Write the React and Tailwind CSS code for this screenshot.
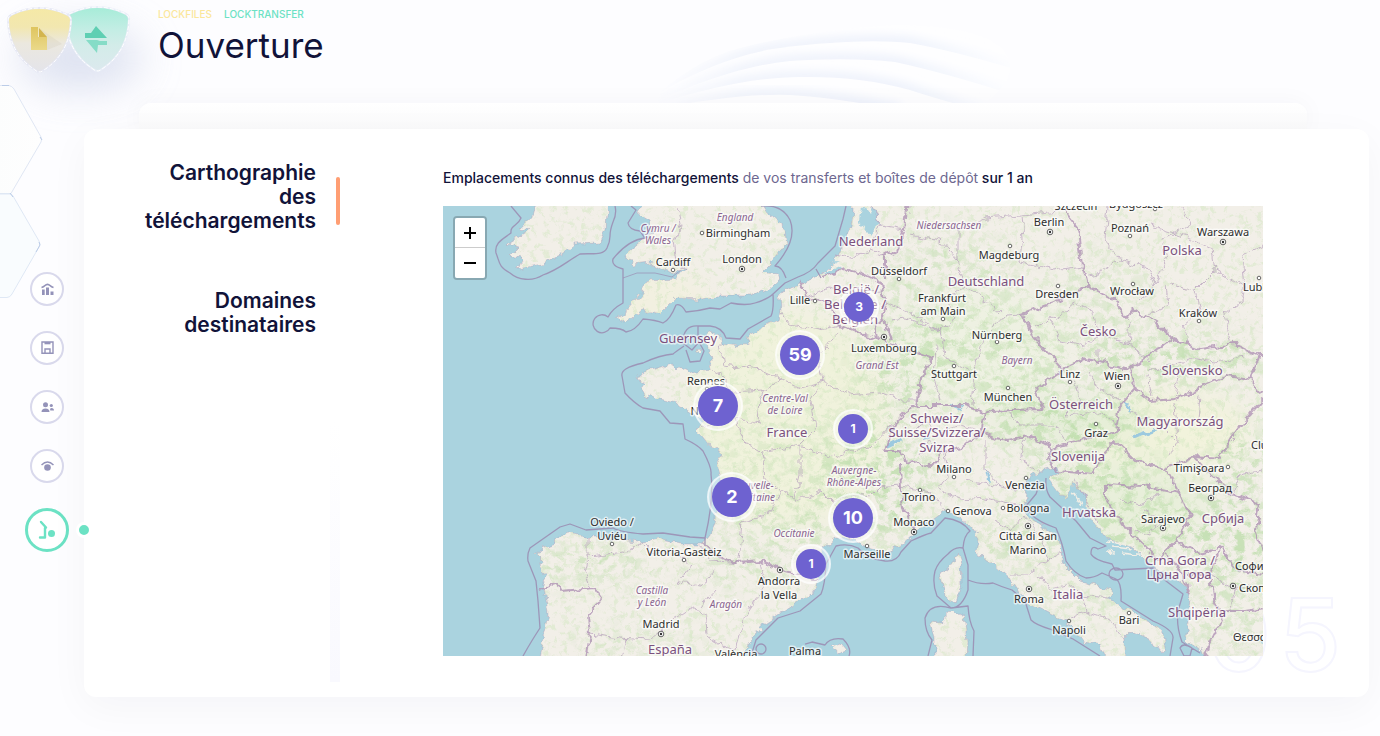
import React from "react";

const LAND = [
  "M539 660 L543 638 L548 614 L545 594 L543 583 L547 576 L540 570 L544 562 L536 554 L540 548 L556 543 L558 537 L568 532 L580 534 L583 538 L610 538 L630 541 L643 543 L660 540 L683 544 L703 544 L711 534 L715 518 L718 496 L721 474 L717 462 L723 452 L710 446 L698 431 L702 420 L688 409 L676 403 L656 398 L648 394 L645 398 L640 388 L646 384 L636 378 L640 373 L656 369 L673 364 L680 369 L688 373 L696 371 L712 369 L710 353 L703 338 L709 333 L719 335 L721 343 L738 346 L750 342 L748 336 L761 328 L778 321 L781 311 L780 296 L785 289 L801 284 L818 276 L825 271 L835 263 L841 249 L850 233 L853 213 L853 200 L1270 200 L1270 660 L1206 660 L1203 652 L1193 646 L1185 634 L1190 624 L1187 611 L1190 594 L1185 586 L1175 578 L1163 571 L1146 561 L1133 548 L1106 538 L1090 519 L1083 494 L1073 481 L1068 498 L1060 494 L1048 479 L1059 473 L1056 467 L1040 471 L1028 479 L1022 487 L1029 496 L1023 506 L1030 518 L1050 531 L1060 548 L1063 564 L1080 581 L1103 588 L1113 589 L1108 598 L1126 608 L1140 618 L1160 629 L1167 641 L1163 652 L1153 646 L1150 639 L1131 631 L1123 639 L1124 660 L1106 660 L1100 644 L1083 641 L1071 624 L1060 618 L1040 608 L1023 598 L1010 579 L993 564 L976 550 L979 538 L966 521 L945 511 L931 521 L915 533 L901 546 L885 553 L868 548 L851 539 L835 538 L823 548 L818 562 L818 578 L815 591 L791 606 L763 624 L748 644 L742 660 Z",
  "M643 200 L638 214 L650 221 L653 233 L643 239 L635 246 L625 254 L633 264 L650 262 L662 270 L674 274 L686 266 L676 278 L650 280 L641 293 L628 309 L616 318 L626 323 L643 309 L660 314 L676 298 L703 299 L718 296 L751 296 L768 289 L779 280 L777 274 L762 272 L773 261 L785 246 L782 223 L768 213 L760 200 Z",
  "M537 200 L531 218 L520 228 L529 230 L514 239 L506 244 L519 247 L510 256 L522 258 L518 269 L543 264 L560 256 L576 244 L600 243 L606 229 L608 200 Z",
  "M958 554 L961 564 L962 584 L955 603 L945 594 L940 574 L950 567 Z",
  "M931 621 L940 622 L952 611 L964 616 L967 640 L966 660 L935 660 L935 638 Z",
  "M832 647 L840 644 L845 650 L837 653 Z",
  "M696 350 l5 -1 l-1 4 Z",
];

const MARITIME =
  "M511 206 L521 218 C518 226 510 225 511 233 C503 239 494 243 496 253 C500 263 498 266 510 273 C518 280 532 282 543 275 C558 270 566 262 580 254 C592 253 603 256 607 248 C613 235 607 238 613 222 Q617 214 615 206 M631 206 L636 210 L628 223 Q629 230 640 231 L645 238 Q628 240 613 259 Q611 266 623 269 L623 303 Q612 309 608 317 A9 9 0 1 0 610 328 Q622 328 626 332 Q635 331 643 319 Q656 320 663 323 Q670 320 676 305 Q681 303 686 312 Q699 311 710 308 L720 309 L731 303 Q746 306 755 303 Q768 299 773 294 L785 283 L798 277 Q812 272 818 263 L835 246 L843 219 L846 206 M761 206 Q782 204 790 220 Q798 240 775 266 Q782 266 786 278 M816 269 L821 278 M773 294 Q774 310 771 316 L748 329 L740 339 L726 338 Q722 327 710 326 L698 326 Q683 325 683 343 L692 350 L699 342 L704 351 L700 361 L690 362 L686 350 M698 326 L698 342 M684 346 Q674 353 673 354 Q660 355 643 363 Q620 368 622 376 L625 393 Q634 403 643 408 L660 411 L670 423 L683 424 L685 439 Q698 445 703 451 Q712 468 711 474 Q714 500 705 538 L690 537 L663 533 L643 534 Q620 532 613 528 L586 530 L570 524 L560 527 L530 548 Q527 554 528 561 L536 581 L538 601 L540 628 Q532 640 523 656 M705 538 V545 M751 656 L756 640 L778 618 L800 611 L821 594 Q825 585 826 564 L836 546 Q848 543 858 548 Q867 559 885 561 Q897 562 901 552 L911 541 Q926 534 931 533 L945 518 Q962 520 970 531 Q964 535 963 548 Q955 546 948 554 Q938 562 935 571 Q932 584 937 596 L951 608 Q962 608 968 590 L968 565 L963 548 M951 608 Q930 602 925 618 Q925 632 932 640 L928 656 M951 608 L968 606 Q969 622 974 631 L973 656 M968 580 Q980 585 993 583 Q1002 587 1012 590 L1025 601 L1031 620 Q1036 625 1050 629 L1073 639 L1100 656 M805 644 L812 642 L825 645 Q830 637 843 639 Q852 648 849 656 M1038 481 Q1038 490 1036 494 L1026 506 Q1030 519 1056 528 Q1063 544 1066 561 Q1074 574 1086 578 Q1094 578 1102 573 L1116 579 Q1122 583 1121 601 L1153 621 Q1174 630 1173 638 L1170 656 M1046 478 Q1045 490 1050 497 L1076 521 L1090 538 L1106 546 L1098 549 Q1091 544 1091 554 Q1094 560 1112 564 L1115 570 L1153 568 L1166 581 L1183 594 L1178 611 Q1176 626 1182 642 L1200 653 M1109 574 a7 6 0 1 0 14 0 a7 6 0 1 0 -14 0 M1180 648 q3 -6 12 0 l-2 8 h-6 Z M756 649 a5 5 0 1 0 10 0 a5 5 0 1 0 -10 0";

const BORDERS =
  "M703 544 L718 556 L738 563 L761 561 L785 571 L800 575 L817 579 M538 590 L558 583 L561 591 L595 588 L603 599 L588 616 L590 634 L586 660 M800 279 L806 296 L828 303 L841 326 L860 334 L878 339 L931 358 L921 379 L916 406 M821 278 L845 269 L861 273 L881 283 L885 303 L882 318 L892 339 M908 200 L905 229 L898 249 L885 256 L885 279 M878 339 L876 325 L884 316 M916 406 L905 413 L891 429 L885 451 L900 451 L905 464 L918 461 L930 468 L945 451 L961 448 L981 434 L985 413 L965 406 Z M900 464 L901 488 L903 508 L915 531 M1066 200 L1066 214 L1078 229 L1081 256 L1088 286 L1053 303 L1023 314 L1033 336 L1063 369 L1086 359 L1130 369 L1166 343 L1173 339 L1156 323 L1133 309 L1126 318 L1116 301 L1088 286 M1130 369 L1135 389 L1150 401 L1175 399 L1200 388 L1226 376 L1250 379 L1260 356 L1236 344 L1200 349 L1173 339 M1260 356 L1270 356 M1063 369 L1036 389 L1043 409 L1015 410 L993 411 L985 413 M1135 389 L1120 406 L1116 431 L1085 439 L1053 448 L1030 436 L1005 440 L981 434 M1053 448 L1048 458 L1056 471 L1093 474 L1103 454 L1115 441 L1136 461 L1166 468 L1193 456 L1220 458 L1240 426 L1263 399 M1105 484 L1143 486 L1180 494 L1190 518 L1176 541 L1166 551 L1158 560 L1126 528 L1105 498 Z M1166 468 L1180 494 M1193 456 L1210 474 L1233 494 L1260 504 L1256 531 L1265 554 M1176 541 L1200 554 L1220 548 L1240 571 L1265 574 M1166 554 L1180 571 L1190 594 M1186 574 L1210 574 L1213 598 L1223 618 L1210 644 L1205 660 M1223 612 L1245 612 L1265 609 M1210 574 L1220 548 M1250 379 L1263 394";

const REGIONS =
  "M588 538 L588 556 L584 572 L590 588 M588 556 L625 552 L643 543 M643 543 L655 555 L670 548 L690 565 L678 582 L702 586 L715 570 M700 545 L712 560 L738 563 M760 562 L765 585 L745 615 L735 650 M590 634 L620 638 L650 640 L672 620 L690 608 L705 615 L708 640 L735 650 M626 638 L622 660 M715 590 L700 608 M781 311 L790 325 L820 330 L841 326 M720 343 L724 365 L760 370 L782 380 L800 388 L822 382 L818 355 L838 332 M712 369 L724 378 L732 392 L764 390 L782 378 M822 382 L810 400 L815 430 L800 445 L830 458 L852 450 L870 448 L892 425 M822 382 L850 395 L880 392 L900 400 L916 400 M700 428 L735 418 L758 424 L760 400 L764 390 M735 418 L742 440 L762 452 L800 445 M762 452 L765 478 L780 490 L800 500 L820 490 L832 502 L850 495 M800 445 L800 475 L794 500 M780 490 L770 515 L742 522 L738 560 M832 502 L850 530 L852 540 M850 495 L870 498 L880 488 L900 486 M885 256 L870 250 L850 258 L835 255 M870 250 L880 225 L905 229 M880 225 L872 206 M806 296 L830 288 L850 292 L882 290 M910 235 L940 240 L958 260 L964 285 L945 300 L955 318 L940 330 L905 318 L890 320 M885 303 L905 310 L925 322 L940 330 L945 355 L975 375 L982 340 L1005 315 L1023 314 M964 285 L985 300 L1000 312 M958 260 L958 230 L985 218 L1022 215 L1024 240 L1020 262 L1055 270 L1082 266 M1022 215 L1066 210 M975 375 L972 405 M936 345 L934 378 L940 400 M1108 206 L1105 240 L1120 260 L1100 272 L1088 275 M1120 260 L1148 268 L1156 285 L1140 300 M1156 285 L1166 260 L1162 240 L1190 225 L1182 206 M1148 225 L1190 238 L1212 250 L1215 270 L1195 290 L1170 284 M1215 270 L1245 288 L1242 300 L1225 315 L1232 345 M1195 290 L1200 310 L1182 325 L1188 342 M1245 288 L1242 255 L1263 245 M1166 285 L1168 305 L1148 315 M1035 326 L1060 315 L1075 302 L1095 312 L1098 335 L1085 345 L1060 340 L1052 320 M1098 335 L1130 345 L1150 360 M1130 320 L1128 345 M1098 350 L1098 362 M1150 370 L1175 365 L1190 358 L1215 362 L1245 358 M1148 375 L1152 398 M1180 370 L1175 398 M1075 380 L1080 400 L1065 415 L1098 412 L1116 425 M1120 400 L1100 390 L1088 372 M1010 412 L1020 425 L1055 425 L1065 440 M945 451 L948 475 L938 490 L960 500 L985 498 L1020 505 M900 486 L930 492 L945 511 M965 480 L1000 486 L1022 490 M985 440 L985 470 L1000 486 M1025 440 L1020 460 L1040 471 M993 520 L1010 530 L1024 515 L1040 535 L1048 560 L1028 575 L1010 575 M1048 560 L1062 552 M1040 575 L1052 590 L1070 585 L1082 595 L1085 612 L1068 618 M1082 595 L1108 598 M1085 612 L1110 620 L1123 639 M1175 405 L1178 440 L1170 455 M1200 395 L1198 420 M1130 410 L1160 425 L1175 440 M1145 510 L1160 520 L1150 535 L1135 530 M1120 500 L1140 505 L1160 495 M1210 574 L1235 590 L1250 585 M1235 590 L1230 610 M1233 494 L1240 475 L1263 470 M1100 525 L1085 500 L1075 480 M678 206 L682 225 L673 240 L676 262 L685 268 M915 430 L925 420 L940 432 L960 425 L978 430 M920 455 L930 440 L945 451";

const GREENERY = [
  [880, 480, 55, 60, 0.9], [1060, 420, 95, 24, 1], [800, 520, 50, 38, 0.6], [950, 290, 70, 60, 0.5],
  [1000, 360, 80, 40, 0.6], [1170, 360, 100, 25, 0.9], [1090, 470, 60, 30, 0.9], [1150, 530, 60, 36, 0.9],
  [1235, 540, 45, 50, 0.9], [900, 370, 45, 45, 0.8], [1020, 540, 50, 22, 0.8], [740, 565, 60, 12, 0.8],
  [590, 562, 60, 18, 0.8], [640, 650, 70, 20, 0.4], [1100, 300, 50, 50, 0.4], [1230, 620, 50, 40, 0.5],
  [1240, 460, 30, 30, 0.9], [1060, 600, 80, 20, 0.4], [735, 500, 20, 40, 0.6], [800, 440, 80, 40, 0.35],
];

const CITIES = [
  ["Birmingham", 738, 237], ["Cardiff", 673, 266], ["London", 742, 263], ["Lille", 800, 304], ["Düsseldorf", 899, 275],
  ["Frankfurt", 942, 302], ["am Main", 943, 315], ["Luxembourg", 884, 352], ["Stuttgart", 954, 378], ["Nürnberg", 997, 339],
  ["München", 1008, 401], ["Magdeburg", 1009, 259], ["Berlin", 1049, 226], ["Szczecin", 1076, 210], ["Poznań", 1130, 232],
  ["Bydgoszcz", 1136, 208], ["Warszawa", 1223, 236], ["Wrocław", 1132, 295], ["Dresden", 1057, 298], ["Kraków", 1198, 317], ["Linz", 1070, 378],
  ["Wien", 1117, 380], ["Graz", 1096, 437], ["Milano", 954, 473], ["Torino", 919, 501], ["Genova", 972, 515],
  ["Monaco", 914, 526], ["Marseille", 867, 558], ["Venezia", 1025, 489], ["Bologna", 1028, 512], ["Città di San", 1028, 540],
  ["Marino", 1028, 554], ["Roma", 1029, 603], ["Napoli", 1069, 634], ["Bari", 1129, 624], ["Sarajevo", 1163, 523],
  ["Београд", 1210, 492], ["Timişoara", 1199, 472], ["Oviedo /", 612, 526], ["Uviéu", 612, 540], ["Vitoria-Gasteiz", 684, 556],
  ["Madrid", 661, 628], ["Andorra", 779, 585], ["la Vella", 779, 599], ["València", 736, 658], ["Palma", 805, 655],
  ["Rennes", 706, 385], ["Nantes", 709, 415],
];

const EDGE_CITIES = [
  ["Lublin", 1243, 291], ["Cluj-Napoca", 1251, 449], ["София", 1235, 570], ["Скопје", 1239, 592], ["Θεσσαλονίκη", 1233, 641],
];

const COUNTRIES = [
  ["Nederland", 871, 246], ["België /", 856, 294], ["Belgique /", 855, 309], ["Belgien", 855, 324], ["Deutschland", 986, 286],
  ["Polska", 1182, 255], ["Česko", 1098, 336], ["Slovensko", 1192, 375], ["Österreich", 1081, 409], ["Magyarország", 1180, 426],
  ["Slovenija", 1078, 461], ["Hrvatska", 1089, 517], ["Србија", 1223, 523], ["Crna Gora /", 1180, 565], ["Црна Гора", 1179, 579],
  ["Shqipëria", 1197, 617], ["Italia", 1068, 599], ["España", 670, 654], ["France", 787, 437], ["Guernsey", 688, 343],
  ["Schweiz/", 937, 423], ["Suisse/Svizzera/", 937, 437], ["Svizra", 937, 452],
];

const AREAS = [
  ["England", 735, 221], ["Cymru /", 658, 232], ["Wales", 658, 244], ["Niedersachsen", 949, 229], ["Grand Est", 877, 369],
  ["Centre-Val", 785, 402], ["de Loire", 785, 414], ["Bayern", 1017, 364], ["Auvergne-", 854, 474], ["Rhône-Alpes", 854, 486],
  ["Nouvelle-", 753, 489], ["Aquitaine", 754, 501], ["Occitanie", 794, 537], ["Castilla", 652, 594], ["y León", 652, 606],
  ["Aragón", 726, 608],
];

const DOTS = [
  [702, 233], [673, 270], [815, 301], [899, 279], [943, 319], [954, 366], [997, 342], [1008, 388], [1010, 246], [1130, 236],
  [1155, 209], [1133, 284], [1058, 286], [1199, 321], [1070, 382], [1096, 424], [954, 477], [920, 490], [948, 511], [867, 546],
  [1026, 478], [1003, 508], [1069, 621], [1129, 613], [1228, 467], [612, 544], [684, 560], [1259, 278], [707, 389],
];

const CAPITALS = [
  [742, 269], [884, 337], [1050, 232], [1223, 242], [1118, 386], [914, 532], [1028, 526], [1029, 589], [1163, 528],
  [1211, 498], [661, 634], [780, 570], [1233, 586],
];

const MARKERS = [
  { id: "be", count: 3, place: "left-[396px] top-[81px]", small: true },
  { id: "paris", count: 59, place: "left-[332px] top-[124px]" },
  { id: "nantes", count: 7, place: "left-[250px] top-[175px]" },
  { id: "lyon", count: 1, place: "left-[390px] top-[203px]", small: true },
  { id: "bordeaux", count: 2, place: "left-[264px] top-[266px]" },
  { id: "marseille", count: 10, place: "left-[385px] top-[287px]" },
  { id: "perpignan", count: 1, place: "left-[348px] top-[338px]", small: true },
];

function Labels({ items, anchor, className }) {
  return (
    <g textAnchor={anchor} className={className} stroke="#ffffff" strokeOpacity="0.65" strokeWidth="3" strokeLinejoin="round" paintOrder="stroke">
      {items.map(([text, x, y]) => (
        <text key={text} x={x} y={y}>{text}</text>
      ))}
    </g>
  );
}

function EuropeMap() {
  return (
    <svg viewBox="443 206 820 450" preserveAspectRatio="xMinYMin slice" className="block h-full w-full" role="img" aria-label="Europe">
      <defs>
        <clipPath id="land">{LAND.map((d) => <path key={d} d={d} />)}</clipPath>
        <filter id="rough" filterUnits="userSpaceOnUse" x="430" y="190" width="850" height="480" colorInterpolationFilters="sRGB">
          <feTurbulence type="fractalNoise" baseFrequency="0.11" numOctaves="3" seed="4" />
          <feColorMatrix values="1 0 0 0 0  0 1 0 0 0  0 0 1 0 0  0 0 0 0 1" result="n" />
          <feDisplacementMap in="SourceGraphic" in2="n" scale="9" xChannelSelector="R" yChannelSelector="G" />
        </filter>
        <filter id="woods" filterUnits="userSpaceOnUse" x="430" y="190" width="850" height="480" colorInterpolationFilters="sRGB">
          <feTurbulence type="fractalNoise" baseFrequency="0.09 0.12" numOctaves="6" seed="11" />
          <feColorMatrix values="0 0 0 0 0.75  0 0 0 0 0.87  0 0 0 0 0.68  5 0 0 0 -2.4" />
        </filter>
        <filter id="fields" filterUnits="userSpaceOnUse" x="430" y="190" width="850" height="480" colorInterpolationFilters="sRGB">
          <feTurbulence type="fractalNoise" baseFrequency="0.16" numOctaves="5" seed="27" />
          <feColorMatrix values="0 0 0 0 0.81  0 0 0 0 0.90  0 0 0 0 0.74  0 5 0 0 -2.6" />
        </filter>
        <filter id="soft"><feGaussianBlur stdDeviation="14" /></filter>
        <mask id="density" maskUnits="userSpaceOnUse" x="430" y="190" width="850" height="480">
          <g filter="url(#soft)" fill="#fff">
            {GREENERY.map(([x, y, rx, ry, o]) => <ellipse key={`${x}-${y}`} cx={x} cy={y} rx={rx} ry={ry} opacity={o} />)}
          </g>
        </mask>
      </defs>
      <rect x="443" y="206" width="820" height="450" fill="#aad3df" />
      <g filter="url(#rough)">
        <g fill="#f2efe8">{LAND.map((d) => <path key={d} d={d} />)}</g>
        <g clipPath="url(#land)">
          <g filter="url(#soft)">
            <ellipse cx="790" cy="420" rx="100" ry="110" fill="#f0f2dc" />
            <ellipse cx="1160" cy="430" rx="90" ry="40" fill="#f2f3dc" />
            <ellipse cx="980" cy="350" rx="90" ry="60" fill="#eef1e2" />
            <ellipse cx="1070" cy="420" rx="80" ry="20" fill="#e3edd6" />
            <ellipse cx="1130" cy="500" rx="80" ry="40" fill="#e8efda" />
            <ellipse cx="650" cy="300" rx="60" ry="30" fill="#f2f0e0" />
            <ellipse cx="970" cy="500" rx="50" ry="20" fill="#f2efe8" />
          </g>
          <rect x="430" y="190" width="850" height="480" filter="url(#fields)" opacity="0.45" />
          <g mask="url(#density)" opacity="0.9">
            <rect x="430" y="190" width="850" height="480" filter="url(#woods)" />
          </g>
        </g>
        <g fill="none" stroke="#a78fae" strokeOpacity="0.45" strokeWidth="0.8">{LAND.map((d) => <path key={d} d={d} />)}</g>
        <g fill="#aad3df">
          <path d="M862 206 L868 214 L872 206 L880 224 L870 236 L860 222 Z" />
          <path d="M822 274 L838 266 L842 269 L830 275 Z M824 262 L840 261 L832 265 Z" />
          <path d="M1070 484 L1080 494 L1090 512 L1084 510 L1076 498 L1070 498 Z M1262 640 l6 -8 v20 Z" />
          <path d="M886 444 l14 -5 l1 3 l-14 6 Z M1131 436 l22 -8 l2 3 l-20 8 Z M985 468 l6 14 l-4 -1 Z" fill="#9cc9df" />
          <path d="M923 440 l8 -3 M950 405 l12 4 M1124 402 l6 8" stroke="#9cc9df" strokeWidth="2" />
        </g>
        <g fill="none" stroke="#f1eee6" strokeWidth="1.6">
          <path d="M1074 492 l8 13 M1082 508 l9 9 M1094 519 l8 10 M1108 541 l18 4 M1112 547 l20 2 M1122 553 l22 3 M1106 552 l10 1" />
        </g>
        <path d={REGIONS} fill="none" stroke="#b8a1bd" strokeOpacity="0.7" strokeWidth="1" />
        <path d={BORDERS} fill="none" stroke="#b093b5" strokeOpacity="0.8" strokeWidth="2" strokeLinejoin="round" />
      </g>
      <path d={MARITIME} fill="none" stroke="#9b8fb4" strokeOpacity="0.9" strokeWidth="1.3" strokeLinejoin="round" />
      <path d="M623 278 L637 273 L655 273 L672 277 L681 270" fill="none" stroke="#9b8fb4" strokeOpacity="0.7" />
      <g fill="#ffffff" stroke="#555" strokeWidth="0.9">
        {DOTS.map(([x, y]) => <circle key={`${x}-${y}`} cx={x} cy={y} r="1.8" />)}
        {CAPITALS.map(([x, y]) => <circle key={`${x}-${y}`} cx={x} cy={y} r="2.8" />)}
      </g>
      <g fill="#333">
        {CAPITALS.map(([x, y]) => <circle key={`${x}-${y}`} cx={x} cy={y} r="1.2" />)}
      </g>
      <Labels items={AREAS} anchor="middle" className="fill-[#8a6590] text-[10px] italic" />
      <Labels items={COUNTRIES} anchor="middle" className="fill-[#7b517e] text-[13px]" />
      <Labels items={CITIES} anchor="middle" className="fill-[#2e2e2e] text-[11px]" />
      <Labels items={EDGE_CITIES} anchor="start" className="fill-[#2e2e2e] text-[11px]" />
    </svg>
  );
}

function Marker({ count, place, small }) {
  return (
    <button
      type="button"
      aria-label={`${count} téléchargements`}
      className={`absolute flex items-center justify-center rounded-full border-2 border-white/60 bg-white/40 ${small ? "size-10" : "size-[50px]"} ${place}`}
    >
      <span
        className={`flex shrink-0 items-center justify-center rounded-full bg-[#6e62d0] text-white ${small ? "size-[30px] text-xs font-bold" : "size-10 text-lg font-bold"}`}
      >
        {count}
      </span>
    </button>
  );
}

const WAVES = [
  "M650 98 Q720 56 780 48 Q860 38 910 43 Q960 52 1030 74",
  "M650 104 Q730 67 790 61 Q850 57 895 62 Q950 74 1020 97",
  "M650 106 Q740 77 800 77 Q860 76 910 90 Q940 100 1000 116",
  "M650 110 Q740 93 790 95 Q830 97 900 110",
];

function Backdrop() {
  return (
    <div aria-hidden="true" className="pointer-events-none absolute inset-0 overflow-hidden">
      <svg width="1100" height="320" viewBox="0 0 1100 320" fill="none">
        <defs>
          <filter id="haze" x="-80%" y="-120%" width="260%" height="340%"><feGaussianBlur stdDeviation="20" /></filter>
          <filter id="fade" x="-10%" y="-60%" width="120%" height="220%"><feGaussianBlur stdDeviation="4" /></filter>
          <linearGradient id="hexA" x1="0" y1="0" x2="1" y2="0"><stop offset="0" stopColor="#fcfdfd" /><stop offset="1" stopColor="#fefefe" /></linearGradient>
          <linearGradient id="ends" gradientUnits="userSpaceOnUse" x1="655" y1="0" x2="1012" y2="0"><stop offset="0" stopColor="#fdfdff" /><stop offset="0.25" stopColor="#f1f4fc" /><stop offset="0.7" stopColor="#eff3fc" /><stop offset="1" stopColor="#fcfdff" /></linearGradient>
          <clipPath id="dome"><path d="M655 110 L660 92 Q700 58 740 48 Q810 30 895 25 Q1012 26 1010 70 Q1008 86 985 103 L980 110 Z" /></clipPath>
        </defs>
        <ellipse cx="80" cy="58" rx="62" ry="32" fill="#d3d9ec" opacity="0.75" filter="url(#haze)" />
        <path d="M-4 85.500 H9 Q12 86 14 89 L41 137 Q42 140 41 142 L13 190 L11 193.500 H-4 Z" fill="url(#hexA)" stroke="#e0e7f4" />
        <path d="M-4 194 H10 Q12 194 13 196 L39 241 Q41 244 39 247 L12 294 Q10 297.500 7 297.500 H-4 Z" fill="#f9fcfe" stroke="#dfe8f5" />
        <path d="M2 85.500 H9 M40 137 L42 140 M10 193 L13 197 M39 242 L40 245 L36 252" stroke="#bccde8" />
        <g clipPath="url(#dome)">
          <path d="M655 110 V20 H1015 V110 Z" fill="#fefeff" />
          {WAVES.map((d) => (
            <g key={d}>
              <path d={d} stroke="url(#ends)" strokeWidth="13" filter="url(#fade)" />
              <path d={`${d} V130 H650 Z`} fill="#fefeff" />
            </g>
          ))}
        </g>
      </svg>
    </div>
  );
}

function Logo() {
  const shield = "M3 12 Q3 8 8 6 Q34.500 -6 61 6 Q66 8 66 12 Q65 45 39 62 Q34.500 66 30 62 Q4 45 3 12 Z";
  return (
    <svg width="134" height="78" viewBox="0 0 134 78" fill="none" role="img" aria-label="LockFiles et LockTransfer">
      <defs>
        <linearGradient id="gold" x1="0" y1="0" x2="0" y2="1"><stop offset="0" stopColor="#f5e9a6" /><stop offset="0.3" stopColor="#f2e7b0" /><stop offset="0.55" stopColor="#ebe8df" /><stop offset="1" stopColor="#e4e4ea" /></linearGradient>
        <linearGradient id="mint" x1="0" y1="0" x2="0" y2="1"><stop offset="0" stopColor="#a6ecd8" /><stop offset="0.35" stopColor="#c3ede4" /><stop offset="0.6" stopColor="#d3ece9" /><stop offset="1" stopColor="#dce9ee" /></linearGradient>
        <linearGradient id="goldIcon" x1="0" y1="0" x2="0" y2="1"><stop offset="0" stopColor="#dfc55f" /><stop offset="1" stopColor="#ead98a" /></linearGradient>
      </defs>
      <g transform="translate(63 7)">
        <path d={shield} fill="url(#mint)" stroke="#e9eef8" strokeWidth="2" />
        <path d={shield} stroke="#ffffff" strokeWidth="1" strokeDasharray="4 2" />
      </g>
      <g transform="translate(5 8)">
        <path d={shield} fill="url(#gold)" stroke="#e6e8f4" strokeWidth="2" />
        <path d={shield} stroke="#ffffff" strokeWidth="1" strokeDasharray="4 2" />
      </g>
      <path d="M39 28 L62 44 L47 50 Z" fill="#cfc9b4" opacity="0.25" />
      <path d="M31 27 H38 V37 H47 V50 H31 Z" fill="url(#goldIcon)" />
      <path d="M39 28 L47 37 H39 Z" fill="#d3b54e" />
      <path d="M85 33 H91 L96 26 L107 38 H85 Z" fill="#5fcfb3" />
      <path d="M86 40 H97 L100 41 H107 V45 H98 L97 53 Z" fill="#86dcc7" />
    </svg>
  );
}

const NAV = [
  {
    label: "Statistiques",
    icon: <><path d="M0.500 5.500 Q2.500 5 4 3.500 Q6.500 1 9 3.500 Q10.500 5 12.500 5.500" fill="none" stroke="currentColor" strokeWidth="1.700" /><path d="M1 7.500 h2.700 v5.500 h-2.700 Z M5 5.500 h3 v7.500 h-3 Z M9.500 9.500 h3 v3.500 h-3 Z" /></>,
  },
  {
    label: "Stockage",
    icon: <><path d="M1 1 H12 V12.300 H1 Z M4 12 V8 H9 V12" fill="none" stroke="currentColor" strokeWidth="1.400" /><path d="M3.500 1 H9.500 V3.300 H3.500 Z" /></>,
  },
  {
    label: "Utilisateurs",
    icon: <><circle cx="4.500" cy="4.800" r="2.500" /><circle cx="10.300" cy="5.500" r="1.600" /><path d="M0.500 12 Q0.500 8.500 4.500 8.500 Q8.500 8.500 8.500 12 Z M9.300 10.500 Q8.500 8 10.500 8 Q13 8 13 10.500 Z" /></>,
  },
  {
    label: "Consultation",
    icon: <><circle cx="6.500" cy="8.500" r="3.300" /><path d="M0.500 6 Q6.500 0 12.500 6" fill="none" stroke="currentColor" strokeWidth="1.500" /></>,
  },
];

function Sidebar() {
  return (
    <nav aria-label="Sections" className="relative flex w-[84px] shrink-0 flex-col items-center gap-[25px] pt-[169px]">
      {NAV.map(({ label, icon }) => (
        <a key={label} href="#" aria-label={label} className="ml-[10px] flex size-[34px] items-center justify-center rounded-full border-2 border-[#d9d9ec] bg-white text-[#9493b9]">
          <svg width="13" height="14" viewBox="0 0 13 14" fill="currentColor">{icon}</svg>
        </a>
      ))}
      <div className="relative flex w-full justify-center">
        <a href="#" aria-label="Ouverture" aria-current="page" className="ml-[10px] flex size-11 items-center justify-center rounded-full border-[3px] border-[#6ce2c4] bg-white">
          <svg width="18" height="20" viewBox="0 0 18 20" fill="none" stroke="#6ce2c4" strokeWidth="2.400" strokeLinecap="round" strokeLinejoin="round">
            <path d="M3 2 L8 7.500 M7 8 V17.500 H2" />
            <circle cx="13.500" cy="13.500" r="3.500" fill="#6ce2c4" stroke="none" />
          </svg>
        </a>
        <span className="absolute -right-2 top-[14px] z-10 size-4 rounded-full border-[3px] border-white bg-[#6ce2c4]" />
      </div>
    </nav>
  );
}

export default function App() {
  return (
    <div className="relative min-h-screen bg-[#fdfdff] font-['Inter','Noto_Sans',sans-serif] text-[#111339]">
      <Backdrop />
      <header className="relative flex h-[103px] items-start">
        <div className="w-[158px] shrink-0"><Logo /></div>
        <div className="pt-[7px]">
          <p className="flex gap-3 text-[10px] leading-[14px] font-medium">
            <span className="text-[#fbe79b]">LOCKFILES</span>
            <span className="text-[#6ce2c4]">LOCKTRANSFER</span>
          </p>
          <h1 className="pt-1 text-[35px] leading-10 font-normal">Ouverture</h1>
        </div>
      </header>

      <main className="relative flex items-start pr-[11px] pb-[39px]">
        <Sidebar />
        <div className="min-w-0 flex-1">
          <div className="mr-[62px] ml-[55px] h-[26px] rounded-t-xl bg-linear-to-b from-white to-[#fafafb] shadow-[0_0_24px_rgba(20,20,80,0.04)]" />
          <section className="relative flex rounded-xl bg-white pt-8 pb-[41px] shadow-[0_10px_40px_rgba(20,20,60,0.04)]">
            <span aria-hidden="true" className="absolute right-[28px] bottom-0 flex gap-2 text-[100px] leading-[124px] font-medium text-transparent [-webkit-text-stroke:2px_#f5f5fe]">
              <span>0</span>
              <span>5</span>
            </span>
            <div className="flex w-64 shrink-0 gap-[14px]">
              <div role="tablist" aria-orientation="vertical" className="flex flex-1 flex-col items-end gap-14">
                <button type="button" role="tab" aria-selected="true" className="w-44 text-right text-[21px] leading-6 font-semibold">Carthographie des téléchargements</button>
                <button type="button" role="tab" aria-selected="false" className="w-44 text-right text-[21px] leading-6 font-semibold">Domaines destinataires</button>
              </div>
              <div className="-mb-[26px] flex w-[10px] justify-end bg-linear-to-b from-white from-50% to-[#f9f9fe] to-100%">
                <span className="mt-4 h-12 w-1 rounded-full bg-[#ff9e73]" />
              </div>
            </div>
            <div className="relative mr-[106px] ml-[103px] min-w-0 flex-1">
              <p className="pt-[7px] pb-[18px] text-[14px] leading-5 font-medium">
                Emplacements connus des téléchargements <span className="font-normal text-[#6d6790]">de vos transferts et boîtes de dépôt</span> sur 1 an
              </p>
              <div className="relative h-[450px] overflow-hidden bg-[#aad3df]">
                <div className="h-full font-['Noto_Sans',sans-serif]"><EuropeMap /></div>
                {MARKERS.map((m) => <Marker key={m.id} {...m} />)}
                <div className="absolute top-[10px] left-[10px] flex flex-col rounded-sm border-2 border-black/20 bg-clip-padding">
                  <button type="button" aria-label="Zoom avant" className="flex h-[30px] w-[30px] items-center justify-center rounded-t-xs border-b border-[#ccc] bg-white">
                    <svg width="14" height="14" viewBox="0 0 14 14" stroke="#000" strokeWidth="2"><path d="M7 1 V13 M1 7 H13" /></svg>
                  </button>
                  <button type="button" aria-label="Zoom arrière" className="flex h-[30px] w-[30px] items-center justify-center rounded-b-xs bg-white">
                    <svg width="14" height="14" viewBox="0 0 14 14" stroke="#000" strokeWidth="2"><path d="M1 7 H13" /></svg>
                  </button>
                </div>
              </div>
            </div>
          </section>
        </div>
      </main>
    </div>
  );
}
